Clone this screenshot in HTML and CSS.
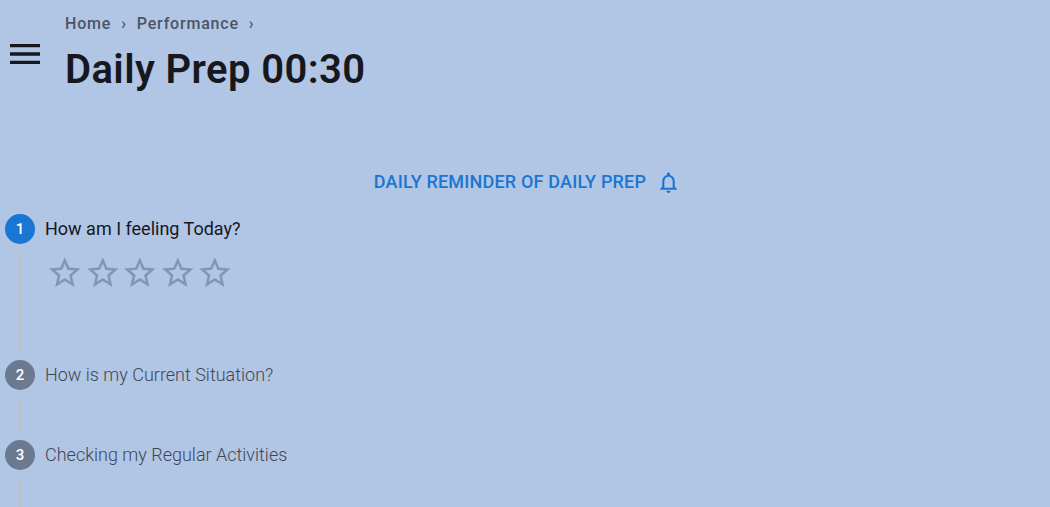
FILE: index.html
```
<!DOCTYPE html>
<html lang="en">
<head>
    <meta charset="UTF-8">
    <meta name="viewport" content="width=device-width, initial-scale=1.0">
    <title>Daily Prep</title>
    <link rel="stylesheet" href="styles.css">
</head>
<body>
    <!-- Page header -->
    <header class="header">
        <button class="menu-button" type="button" aria-label="Open menu">
            <svg viewBox="0 0 24 24"><path d="M3 18h18v-2H3v2zm0-5h18v-2H3v2zm0-7v2h18V6H3z"/></svg>
        </button>
        <div class="heading">
            <nav class="breadcrumbs" aria-label="Breadcrumb">
                <a href="#">Home</a>
                <span class="separator">›</span>
                <a href="#">Performance</a>
                <span class="separator">›</span>
            </nav>
            <h1>Daily Prep 00:30</h1>
        </div>
    </header>

    <main>
        <!-- Reminder -->
        <div class="reminder">
            <button class="reminder-button" type="button">
                DAILY REMINDER OF DAILY PREP
                <svg viewBox="0 0 24 24"><path d="M12 22c1.1 0 2-.9 2-2h-4c0 1.1.9 2 2 2zm6-6v-5c0-3.07-1.63-5.64-4.5-6.32V4c0-.83-.67-1.5-1.5-1.5s-1.5.67-1.5 1.5v.68C7.64 5.36 6 7.92 6 11v5l-2 2v1h16v-1l-2-2zm-2 1H8v-6c0-2.48 1.51-4.5 4-4.5s4 2.02 4 4.5v6z"/></svg>
            </button>
        </div>

        <!-- Steps -->
        <ol class="stepper">
            <li class="step active">
                <div class="step-header">
                    <span class="step-number">1</span>
                    <span class="step-label">How am I feeling Today?</span>
                </div>
                <div class="step-content">
                    <div class="rating" role="radiogroup" aria-label="How am I feeling Today?">
                        <label class="star" for="star1">
                            <input type="radio" name="feeling" id="star1" value="1" aria-label="1 star">
                            <svg viewBox="0 0 24 24"><path d="M22 9.24l-7.19-.62L12 2 9.19 8.63 2 9.24l5.46 4.73L5.82 21 12 17.27 18.18 21l-1.63-7.03L22 9.24zM12 15.4l-3.76 2.27 1-4.28-3.32-2.88 4.38-.38L12 6.1l1.71 4.04 4.38.38-3.32 2.88 1 4.28L12 15.4z"/></svg>
                        </label>
                        <label class="star" for="star2">
                            <input type="radio" name="feeling" id="star2" value="2" aria-label="2 stars">
                            <svg viewBox="0 0 24 24"><path d="M22 9.24l-7.19-.62L12 2 9.19 8.63 2 9.24l5.46 4.73L5.82 21 12 17.27 18.18 21l-1.63-7.03L22 9.24zM12 15.4l-3.76 2.27 1-4.28-3.32-2.88 4.38-.38L12 6.1l1.71 4.04 4.38.38-3.32 2.88 1 4.28L12 15.4z"/></svg>
                        </label>
                        <label class="star" for="star3">
                            <input type="radio" name="feeling" id="star3" value="3" aria-label="3 stars">
                            <svg viewBox="0 0 24 24"><path d="M22 9.24l-7.19-.62L12 2 9.19 8.63 2 9.24l5.46 4.73L5.82 21 12 17.27 18.18 21l-1.63-7.03L22 9.24zM12 15.4l-3.76 2.27 1-4.28-3.32-2.88 4.38-.38L12 6.1l1.71 4.04 4.38.38-3.32 2.88 1 4.28L12 15.4z"/></svg>
                        </label>
                        <label class="star" for="star4">
                            <input type="radio" name="feeling" id="star4" value="4" aria-label="4 stars">
                            <svg viewBox="0 0 24 24"><path d="M22 9.24l-7.19-.62L12 2 9.19 8.63 2 9.24l5.46 4.73L5.82 21 12 17.27 18.18 21l-1.63-7.03L22 9.24zM12 15.4l-3.76 2.27 1-4.28-3.32-2.88 4.38-.38L12 6.1l1.71 4.04 4.38.38-3.32 2.88 1 4.28L12 15.4z"/></svg>
                        </label>
                        <label class="star" for="star5">
                            <input type="radio" name="feeling" id="star5" value="5" aria-label="5 stars">
                            <svg viewBox="0 0 24 24"><path d="M22 9.24l-7.19-.62L12 2 9.19 8.63 2 9.24l5.46 4.73L5.82 21 12 17.27 18.18 21l-1.63-7.03L22 9.24zM12 15.4l-3.76 2.27 1-4.28-3.32-2.88 4.38-.38L12 6.1l1.71 4.04 4.38.38-3.32 2.88 1 4.28L12 15.4z"/></svg>
                        </label>
                    </div>
                </div>
            </li>
            <li class="step">
                <div class="step-header">
                    <span class="step-number">2</span>
                    <span class="step-label">How is my Current Situation?</span>
                </div>
                <div class="step-content"></div>
            </li>
            <li class="step">
                <div class="step-header">
                    <span class="step-number">3</span>
                    <span class="step-label">Checking my Regular Activities</span>
                </div>
                <div class="step-content"></div>
            </li>
        </ol>
    </main>
</body>
</html>
```
FILE: styles.css
```
/* General Styles */
* {
    box-sizing: border-box;
}

body {
    font-family: Roboto, "Liberation Sans", sans-serif;
    margin: 0;
    background: #b1c5e4;
    color: #17181d;
}

button {
    font: inherit;
    color: inherit;
    background: none;
    border: none;
    padding: 0;
    cursor: pointer;
}

svg {
    display: block;
    fill: currentColor;
}

/* Header */
.header {
    display: flex;
    align-items: center;
    gap: 20px;
    padding: 12px 5px;
}

.menu-button svg {
    width: 40px;
    height: 40px;
}

.breadcrumbs {
    display: flex;
    align-items: center;
    gap: 10px;
    font-size: 16px;
    font-weight: 500;
    line-height: 24px;
    letter-spacing: 0.05em;
    color: #4b5563;
}

.breadcrumbs a {
    color: inherit;
    text-decoration: none;
}

h1 {
    margin: 8px 0 0;
    font-size: 40px;
    font-weight: 600;
    line-height: 52px;
    letter-spacing: 0.01em;
}

/* Reminder */
.reminder {
    display: flex;
    justify-content: center;
    padding-top: 56px;
}

.reminder-button {
    display: flex;
    align-items: center;
    gap: 10px;
    height: 36px;
    font-size: 18px;
    font-weight: 500;
    line-height: 24px;
    letter-spacing: 0.01em;
    color: #1976d2;
}

.reminder-button svg {
    width: 25px;
    height: 25px;
    margin-right: -5px;
}

/* Stepper */
.stepper {
    list-style: none;
    margin: 0;
    padding: 14px 5px 0;
}

.step-header {
    display: flex;
    align-items: center;
    gap: 10px;
}

.step-number {
    display: flex;
    align-items: center;
    justify-content: center;
    width: 30px;
    height: 30px;
    border-radius: 50%;
    background: #6c7a90;
    color: #fff;
    font-size: 15px;
    font-weight: 500;
}

.step-label {
    font-size: 18px;
    font-weight: 300;
    line-height: 24px;
    color: #3f4753;
}

.active .step-number {
    background: #1976d2;
}

.active .step-label {
    font-weight: 400;
    color: #17181d;
}

.step-content {
    min-height: 30px;
    margin: 10px 15px;
    padding-left: 25px;
    border-left: 1px solid #bdbdbd;
}

.active .step-content {
    min-height: 96px;
}

/* Star rating */
.rating {
    display: flex;
    width: 188px;
}

.star {
    position: relative;
    flex: 1;
    color: #8495b0;
    cursor: pointer;
}

.star input {
    position: absolute;
    inset: 0;
    margin: 0;
    opacity: 0;
}
```
